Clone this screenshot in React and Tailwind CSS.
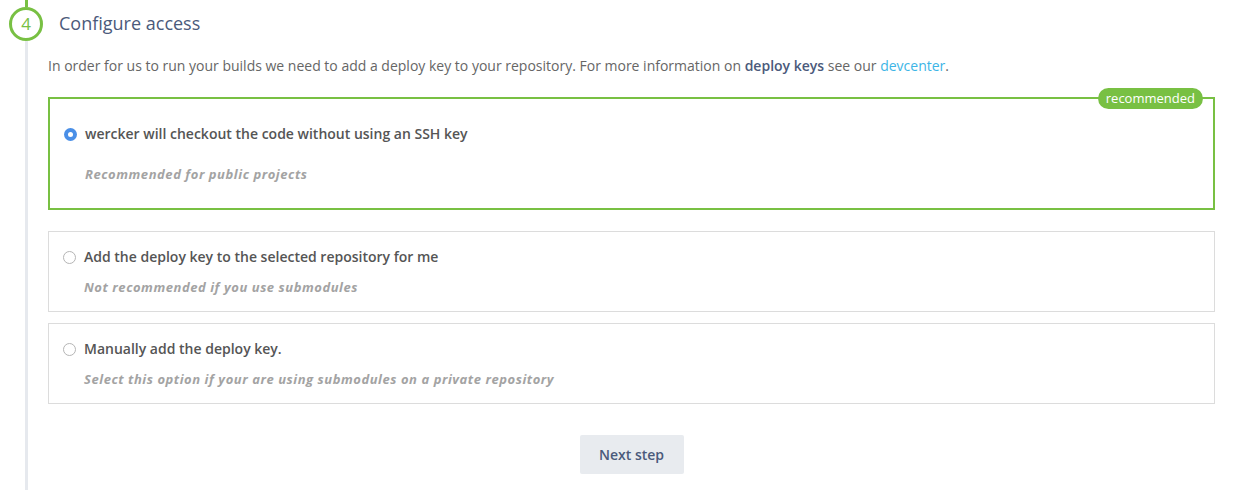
import { useState } from 'react';

const OPTIONS = [
  {
    id: 'none',
    title: 'wercker will checkout the code without using an SSH key',
    hint: 'Recommended for public projects',
    recommended: true,
  },
  {
    id: 'auto',
    title: 'Add the deploy key to the selected repository for me',
    hint: 'Not recommended if you use submodules',
  },
  {
    id: 'manual',
    title: 'Manually add the deploy key.',
    hint: 'Select this option if your are using submodules on a private repository',
  },
];

function Radio({ checked }) {
  if (checked) {
    return (
      <span className="w-[13px] h-[13px] rounded-full bg-[#4a8fe7] flex items-center justify-center shrink-0">
        <span className="w-[5px] h-[5px] rounded-full bg-white" />
      </span>
    );
  }
  return <span className="w-[13px] h-[13px] rounded-full border border-[#b5b5b5] bg-white shrink-0" />;
}

export default function App() {
  const [selected, setSelected] = useState('none');

  return (
    <div className="w-[1251px] h-[490px] bg-white flex overflow-hidden" style={{ fontFamily: '"Open Sans", "Noto Sans", sans-serif' }}>
      {/* Step rail */}
      <div className="w-[48px] shrink-0 flex flex-col pl-[9px]">
        <div className="w-[34px] flex flex-col items-center">
          <div className="w-[3px] h-[7px] bg-[#78c043]" />
          <div className="w-[34px] h-[34px] rounded-full border-[3px] border-[#78c043] flex items-center justify-center text-[17px] text-[#78c043]">
            4
          </div>
          <div className="w-[3px] h-[460px] bg-[#e6e9ee]" />
        </div>
      </div>

      {/* Content */}
      <div className="w-[1167px] flex flex-col">
        <h2 className="pl-[11px] pt-[11px] text-[18px] leading-[24px] text-[#4b5a7b]">Configure access</h2>

        <p className="mt-[21px] text-[14px] leading-[20px] text-[#666]">
          In order for us to run your builds we need to add a deploy key to your repository. For more information on{' '}
          <span className="font-semibold text-[#4b5a7b]">deploy keys</span> see our{' '}
          <span className="text-[#3db5e6]">devcenter</span>.
        </p>

        <div className="mt-[21px] flex flex-col">
          {OPTIONS.map((opt, i) => (
            <label
              key={opt.id}
              onClick={() => setSelected(opt.id)}
              className={
                opt.recommended
                  ? 'relative border-2 border-[#78c043] pl-[14px] pt-[25px] pb-[25px] cursor-pointer'
                  : `relative border border-[#dcdcdc] pl-[14px] pt-[15px] pb-[15px] cursor-pointer ${i === 1 ? 'mt-[21px]' : 'mt-[11px]'}`
              }
            >
              {opt.recommended && (
                <span className="absolute right-[10px] top-[-11px] h-[21px] px-[8px] rounded-full bg-[#78c043] text-white text-[13px] leading-[21px]">
                  recommended
                </span>
              )}
              <div className="flex items-center gap-[8px] h-[20px]">
                <Radio checked={selected === opt.id} />
                <span className="text-[14px] font-semibold text-[#555] leading-[20px]">{opt.title}</span>
              </div>
              <div
                className={`pl-[21px] text-[13px] font-bold italic text-[#a3a3a3] leading-[18px] tracking-[0.55px] ${opt.recommended ? 'mt-[21px]' : 'mt-[11px]'}`}
              >
                {opt.hint}
              </div>
            </label>
          ))}
        </div>

        <div className="mt-[31px] flex justify-center">
          <button className="w-[104px] h-[39px] rounded-[2px] bg-[#e8ebef] text-[14px] font-semibold text-[#4b5a7b]">
            Next step
          </button>
        </div>
      </div>
    </div>
  );
}
